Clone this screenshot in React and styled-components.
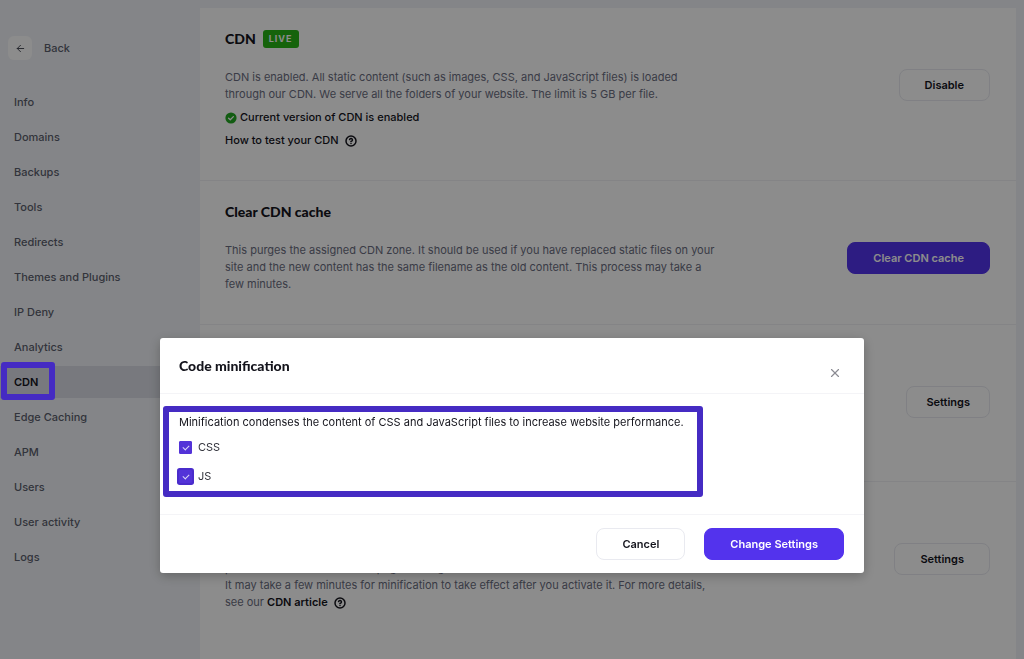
import React, { useState } from 'react';
import styled, { createGlobalStyle, css } from 'styled-components';
import { ArrowLeft, CircleHelp, X } from 'lucide-react';

const GlobalStyle = createGlobalStyle`
  * {
    box-sizing: border-box;
  }

  body {
    margin: 0;
    background: #f1f3f7;
    color: #14141c;
    font-family: Inter, 'Liberation Sans', sans-serif;
    font-size: 11px;
    line-height: 17px;
  }

  h2, p {
    margin: 0;
  }
`;

const Page = styled.div`
  display: flex;
  min-height: 100vh;
`;

const Sidebar = styled.aside`
  flex: 0 0 200px;
  padding-top: 36px;
`;

const BackLink = styled.a`
  display: flex;
  align-items: center;
  gap: 12px;
  margin-left: 8px;
  color: #5c5f6e;
  font-weight: 500;
  text-decoration: none;
`;

const BackIcon = styled.span`
  display: grid;
  place-items: center;
  width: 24px;
  height: 24px;
  border-radius: 6px;
  background: #fff;
  color: #3d404c;
`;

const Nav = styled.nav`
  display: flex;
  flex-direction: column;
  gap: 3px;
  margin-top: 26px;
`;

const NavItem = styled.a`
  position: relative;
  display: flex;
  align-items: center;
  height: 32px;
  padding-left: 14px;
  color: #5c5f6e;
  font-weight: 500;
  text-decoration: none;

  ${({ $active }) =>
    $active &&
    css`
      background: #dadde5;
      color: #14141c;
      font-weight: 600;
    `}
`;

const NavMarker = styled.span`
  position: absolute;
  z-index: 20;
  top: -4px;
  left: 1px;
  width: 54px;
  height: 38px;
  border: 6px solid #452bc3;
  border-radius: 3px;
`;

const Main = styled.main`
  display: flex;
  flex: 1;
  min-width: 0;
  padding: 8px 8px 0 0;
`;

const Card = styled.div`
  flex: 1;
  min-width: 0;
  background: #fff;
`;

const Section = styled.section`
  padding: 21px 26px 31px 25px;
  border-bottom: 1px solid #f0f1f5;

  &:last-child {
    border-bottom: 0;
  }
`;

const ControlSection = styled(Section)`
  display: flex;
  align-items: flex-start;
  justify-content: flex-end;
  min-height: 157px;
  padding-top: 61px;
`;

const Heading = styled.h2`
  display: flex;
  align-items: center;
  gap: 7px;
  height: 20px;
  font-family: Lato, 'Liberation Sans', sans-serif;
  font-size: 14px;
  font-weight: 900;
  line-height: 20px;
`;

const Badge = styled.span`
  padding: 0 6px;
  border-radius: 3px;
  background: #27b414;
  color: #fff;
  font-family: Inter, sans-serif;
  font-size: 9px;
  font-weight: 700;
  letter-spacing: 1px;
  line-height: 18px;
`;

const SectionRow = styled.div`
  display: flex;
  align-items: flex-start;
  justify-content: space-between;
  gap: 24px;
  margin-top: 20px;
`;

const Copy = styled.div`
  display: flex;
  flex-direction: column;
  gap: 6px;
  max-width: 510px;
  color: #6a6d80;
`;

const Status = styled.p`
  display: flex;
  align-items: center;
  gap: 3px;
  color: #14141c;
  font-weight: 500;
`;

const HelpLink = styled.a`
  display: inline-flex;
  align-items: center;
  gap: 6px;
  color: #14141c;
  font-weight: ${({ $strong }) => ($strong ? 600 : 500)};
  text-decoration: none;
`;

const Button = styled.button`
  flex: none;
  height: 32px;
  padding: 0 ${({ $compact }) => ($compact ? 19 : 25)}px;
  border: 1px solid ${({ $primary }) => ($primary ? '#5333ed' : '#e9eaf0')};
  border-radius: 8px;
  background: ${({ $primary }) => ($primary ? '#5333ed' : '#fff')};
  color: ${({ $primary }) => ($primary ? '#fff' : '#14141c')};
  font: 600 11px/17px Inter, sans-serif;
  cursor: pointer;
`;

const Backdrop = styled.div`
  position: fixed;
  z-index: 10;
  inset: 0;
  display: flex;
  align-items: flex-start;
  justify-content: center;
  padding: 338px 24px 24px;
  background: rgba(0, 0, 0, 0.45);
`;

const Dialog = styled.div`
  width: 100%;
  max-width: 704px;
  border-radius: 3px;
  background: #fff;
  box-shadow: 0 3px 12px rgba(0, 0, 0, 0.25);
`;

const DialogHeader = styled.header`
  display: flex;
  align-items: center;
  justify-content: space-between;
  height: 56px;
  padding: 8px 17px 8px 19px;
  border-bottom: 1px solid #f4f4f7;
`;

const CloseButton = styled.button`
  display: grid;
  place-items: center;
  align-self: flex-end;
  width: 24px;
  height: 24px;
  padding: 0;
  border: 0;
  background: none;
  color: #8b8b93;
  cursor: pointer;
`;

const DialogBody = styled.div`
  padding: 12px 3px 17px;
`;

const Highlight = styled.div`
  width: fit-content;
  padding: 2px 13px 5px 10px;
  border: 6px solid #452bc3;
  border-radius: 3px;
`;

const Options = styled.div`
  display: flex;
  flex-direction: column;
  gap: 9px;
  margin-top: 6px;
`;

const Option = styled.label`
  display: flex;
  align-items: center;
  gap: 6px;
  width: fit-content;
  height: 20px;
  color: #33343d;
`;

const Checkbox = styled.input`
  display: grid;
  place-items: center;
  appearance: none;
  width: 13px;
  height: 13px;
  margin: 0;
  border: 1px solid #5333d8;
  border-radius: 1px;
  background: #fff;
  box-shadow: ${({ $ring }) => ($ring ? '0 0 0 2px #4a2ccb' : 'none')};

  &:checked {
    background: #5333d8;
  }

  &:checked::after {
    content: '';
    width: 5px;
    height: 3px;
    margin-top: -1px;
    border: solid #dcd6f8;
    border-width: 0 0 1px 1px;
    transform: rotate(-45deg);
  }
`;

const DialogFooter = styled.footer`
  display: flex;
  justify-content: flex-end;
  gap: 19px;
  padding: 13px 20px;
  border-top: 1px solid #f4f4f7;
`;

const navItems = [
  'Info',
  'Domains',
  'Backups',
  'Tools',
  'Redirects',
  'Themes and Plugins',
  'IP Deny',
  'Analytics',
  'CDN',
  'Edge Caching',
  'APM',
  'Users',
  'User activity',
  'Logs',
];

const CheckCircle = () => (
  <svg width="12" height="12" viewBox="0 0 12 12" aria-hidden="true">
    <circle cx="6" cy="6" r="5.6" fill="#22a821" />
    <path
      d="M3.6 6.2 5.3 7.8 8.4 4.6"
      fill="none"
      stroke="#fff"
      strokeWidth="1.3"
      strokeLinecap="round"
      strokeLinejoin="round"
    />
  </svg>
);

const MinificationDialog = () => {
  const [files, setFiles] = useState({ css: true, js: true });
  const toggle = (key) => setFiles({ ...files, [key]: !files[key] });

  return (
    <Backdrop>
      <Dialog role="dialog" aria-modal="true" aria-labelledby="minification-title">
        <DialogHeader>
          <Heading id="minification-title">Code minification</Heading>
          <CloseButton type="button" aria-label="Close">
            <X size={14} strokeWidth={2} />
          </CloseButton>
        </DialogHeader>
        <DialogBody>
          <Highlight>
            <p>Minification condenses the content of CSS and JavaScript files to increase website performance.</p>
            <Options>
              <Option>
                <Checkbox type="checkbox" checked={files.css} onChange={() => toggle('css')} />
                CSS
              </Option>
              <Option>
                <Checkbox type="checkbox" $ring checked={files.js} onChange={() => toggle('js')} />
                JS
              </Option>
            </Options>
          </Highlight>
        </DialogBody>
        <DialogFooter>
          <Button type="button">Cancel</Button>
          <Button type="button" $primary>Change Settings</Button>
        </DialogFooter>
      </Dialog>
    </Backdrop>
  );
};

const App = () => {
  return (
    <>
      <GlobalStyle />
      <Page>
        <Sidebar>
          <BackLink href="#back">
            <BackIcon>
              <ArrowLeft size={11} strokeWidth={2} />
            </BackIcon>
            Back
          </BackLink>
          <Nav>
            {navItems.map((item) => (
              <NavItem key={item} href="#" $active={item === 'CDN'}>
                {item}
                {item === 'CDN' && <NavMarker />}
              </NavItem>
            ))}
          </Nav>
        </Sidebar>
        <Main>
          <Card>
            <Section>
              <Heading>
                CDN <Badge>LIVE</Badge>
              </Heading>
              <SectionRow>
                <Copy>
                  <p>
                    CDN is enabled. All static content (such as images, CSS, and JavaScript files) is loaded
                    <br />
                    through our CDN. We serve all the folders of your website. The limit is 5 GB per file.
                  </p>
                  <Status>
                    <CheckCircle />
                    Current version of CDN is enabled
                  </Status>
                  <HelpLink href="#test">
                    How to test your CDN
                    <CircleHelp size={12} strokeWidth={3} />
                  </HelpLink>
                </Copy>
                <Button type="button">Disable</Button>
              </SectionRow>
            </Section>
            <Section>
              <Heading>Clear CDN cache</Heading>
              <SectionRow>
                <Copy>
                  <p>
                    This purges the assigned CDN zone. It should be used if you have replaced static files on your
                    <br />
                    site and the new content has the same filename as the old content. This process may take a
                    <br />
                    few minutes.
                  </p>
                </Copy>
                <Button type="button" $primary>Clear CDN cache</Button>
              </SectionRow>
            </Section>
            <ControlSection>
              <Button type="button" $compact>Settings</Button>
            </ControlSection>
            <Section>
              <Heading>Code minification</Heading>
              <SectionRow>
                <Copy>
                  <p>
                    Minify your CSS and JavaScript files to improve website
                    <br />
                    performance and reduce the page loading time.
                    <br />
                    It may take a few minutes for minification to take effect after you activate it. For more details,
                    <br />
                    see our{' '}
                    <HelpLink href="#article" $strong>
                      CDN article
                      <CircleHelp size={12} strokeWidth={3} />
                    </HelpLink>
                  </p>
                </Copy>
                <Button type="button">Settings</Button>
              </SectionRow>
            </Section>
          </Card>
        </Main>
      </Page>
      <MinificationDialog />
    </>
  );
};

export default App;
